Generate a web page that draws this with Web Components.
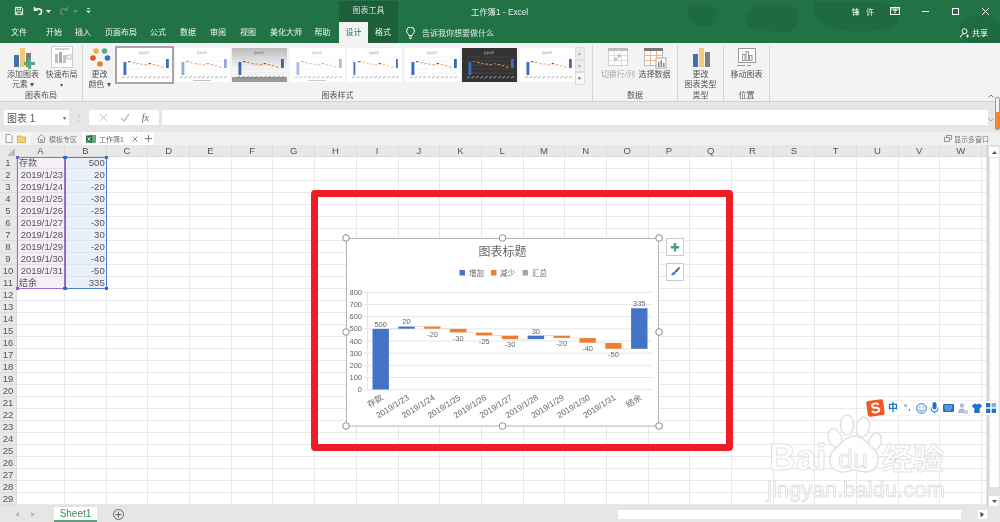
<!DOCTYPE html>
<html lang="zh-CN">
<head>
<meta charset="UTF-8">
<title>工作簿1 - Excel</title>
<style>
  html, body { margin: 0; height: 100%; overflow: hidden; background: #fff; }
  body { font-family: "Liberation Sans", "Noto Sans CJK SC", sans-serif; color: #444; }
  #page { position: relative; width: 1000px; height: 522px; overflow: hidden; display: flex; flex-direction: column; filter: blur(.35px); }
</style>
</head>
<body>
<div id="page">
  <xl-header></xl-header>
  <xl-ribbon></xl-ribbon>
  <xl-formula></xl-formula>
  <xl-books></xl-books>
  <xl-sheet></xl-sheet>
  <xl-sheettabs></xl-sheettabs>
  <xl-watermark></xl-watermark>
  <xl-chart></xl-chart>
  <xl-redframe></xl-redframe>
  <xl-ime></xl-ime>
  <xl-sidegrip></xl-sidegrip>
</div>

<script>
  // small helper, every element is just a shadow root with fixed markup
  const define = (name, html) => {
    customElements.define(name, class extends HTMLElement {
      constructor() {
        super()
        this.attachShadow({ mode: 'open' })
        this.shadowRoot.innerHTML = typeof html === 'function' ? html(this) : html
      }
    })
  }

  define('xl-thumb', (el) => {
    const v = el.getAttribute('v')
    const themes = {
      1: { bg: '#fff', bar: '#3f6cc0', tick: '#f3a878', grid: '#f0f0f0', txt: '#999' },
      2: { bg: '#fff', bar: '#8faadc', tick: '#f5b48c', grid: '#f2f2f2', txt: '#999', foot: 1 },
      3: { bg: 'url(#g3)', bar: '#3a63b0', tick: '#ed8b4c', grid: '#ddd', txt: '#666', band: 1 },
      4: { bg: '#fff', bar: '#a9bce6', tick: '#f8c9a8', grid: '#f6f6f6', txt: '#aaa', foot: 1 },
      5: { bg: '#fff', bar: '#3f6cc0', tick: '#f9c6a2', grid: '#f4f4f4', txt: '#999', thin: 1 },
      6: { bg: '#fff', bar: '#3566c8', tick: '#f3a878', grid: '#eee', txt: '#999', vert: 1 },
      7: { bg: '#333', bar: '#3f6cc0', tick: '#d9803f', grid: '#555', txt: '#bbb' },
      8: { bg: '#fff', bar: '#3f6cc0', tick: '#f3b08a', grid: '#f2f2f2', txt: '#999', vert: 1 }
    }
    const t = themes[v]
    let s = `<rect width="55" height="34" fill="${t.bg}"/>`
    if (t.band) s += '<rect y="29" width="55" height="5" fill="#9a9a9a"/>'
    for (let i = 0; i < 5; i++) s += `<line x1="5" x2="52" y1="${9 + i * 4}" y2="${9 + i * 4}" stroke="${t.grid}" stroke-width=".5"/>`
    if (t.vert) for (let i = 0; i < 11; i++) s += `<line x1="${6 + i * 4.4}" x2="${6 + i * 4.4}" y1="9" y2="27" stroke="${t.grid}" stroke-width=".4"/>`
    s += `<text x="27" y="5.5" font-size="2.6" text-anchor="middle" fill="${t.txt}">图表标题</text>`
    const w = t.thin ? 1.8 : 2.8
    s += `<rect x="${6.5}" y="14" width="${w}" height="13" fill="${t.bar}"/>`
    const ys = [13, 14, 15, 15.5, 16, 15, 16, 17, 18.5]
    ys.forEach((y, i) => {
      s += `<rect x="${11 + i * 4.1}" y="${y}" width="2.6" height="1.2" fill="${i === 0 || i === 5 ? t.bar : t.tick}"/>`
    })
    s += `<rect x="${49}" y="11" width="${w}" height="9" fill="${t.bar}"/>`
    for (let i = 0; i < 11; i++) s += `<line x1="${5 + i * 4.4}" y1="30" x2="${8 + i * 4.4}" y2="28.4" stroke="${t.txt}" stroke-width=".8"/>`
    if (t.foot) s += `<line x1="18" x2="36" y1="32.5" y2="32.5" stroke="${t.txt}" stroke-width=".6"/>`
    return `<style>
      :host { display: block; width: 55px; height: 34px; flex: none; }
      svg { display: block; }
    </style>
    <svg width="55" height="34" viewBox="0 0 55 34"><defs><linearGradient id="g3" x1="0" y1="0" x2="0" y2="1"><stop offset="0" stop-color="#bbb"/><stop offset=".6" stop-color="#f5f5f5"/></linearGradient></defs>${s}</svg>`
  })

  define('xl-header', `<style>
    :host { display: block; height: 43px; background: #217346; position: relative; color: #fff; font-size: 8px; flex: none; overflow: hidden; }
    .blobs { position: absolute; left: 0; top: 0; }
    .top { position: relative; display: flex; height: 22px; align-items: center; }
    .quick { width: 339px; display: flex; align-items: center; padding-left: 14px; box-sizing: border-box; gap: 6px; align-self: stretch; flex: none; }
    .tool { width: 59px; align-self: stretch; margin-top: 1px; background: #1d5f3a; text-align: center; line-height: 20px; color: #cfe0d6; flex: none; }
    .title { margin-left: 73px; color: #e8f1ec; font-size: 8.300px; white-space: nowrap; }
    .win { margin-left: auto; display: flex; align-items: center; }
    .user { margin-right: 4px; letter-spacing: 2px; }
    .win svg { display: block; }
    .box { width: 30px; display: flex; justify-content: center; }
    .tabs { position: relative; display: flex; height: 21px; align-items: center; }
    .t { text-align: center; line-height: 21px; height: 21px; color: #eef5f1; flex: none; }
    .on { background: #f3f3f3; color: #217346; }
    .fmt { background: #1d5f3a; }
    .tell { margin-left: 8px; display: flex; align-items: center; gap: 7px; color: #dfeae4; }
    .share { margin-left: auto; margin-right: 12px; display: flex; align-items: center; gap: 2px; }
  </style>
  <svg class="blobs" width="1000" height="43" fill="#1f6a40">
    <path d="M688 8q10-6 24-2q8 6 4 16q-10 6-20 4q-10-6-8-18z"/>
    <path d="M745 14q14-12 30-10q20-2 24 10q2 12-10 18q-16 2-26-4q-18 4-18-14z"/>
    <path d="M815 2h55q20 0 25 6q10 10-4 20q-30 6-50 2q-30-4-26-28z"/>
    <path d="M960 24q8-10 24-8q16 2 16 14v13h-32q-12-8-8-19z"/>
  </svg>
  <div class="top">
    <div class="quick">
      <svg width="10" height="10" viewBox="0 0 11 11" fill="none" stroke="#fff"><path d="M1.500 1.500h6.500l1.500 1.500v6.500h-8z"/><path d="M3.500 1.500v2.500h3.500v-2.500M3 9.500v-3h5v3"/></svg>
      <svg style="margin-left:3px" width="10" height="10" viewBox="0 0 10 10" fill="none" stroke="#fff" stroke-width="1.400"><path d="M1.500 1v3.200h3.200M1.600 4.200c2-2.400 6.800-2 7 1.200c0 1.800-1.200 3-3 3.200"/></svg>
      <svg width="5" height="3" viewBox="0 0 5 3" fill="#fff" style="margin-left:-3px"><path d="M0 0h5l-2.500 3z"/></svg>
      <svg style="margin-left:2px" width="10" height="10" viewBox="0 0 10 10" fill="none" stroke="#5b9476" stroke-width="1.200"><path d="M8.500 1v3.200h-3.200M8.400 4.200c-2-2.400-6.800-2-7 1.200c0 1.800 1.200 3 3 3.200"/></svg>
      <svg width="5" height="3" viewBox="0 0 5 3" fill="#5b9476" style="margin-left:-2px"><path d="M0 0h5l-2.500 3z"/></svg>
      <svg style="margin-left:2px" width="5" height="6" viewBox="0 0 5 6" fill="#c8dcd0"><path d="M1 0h3v1h-3zM0 2.500h5l-2.500 3z"/></svg>
    </div>
    <div class="tool">图表工具</div>
    <div class="title">工作簿1 - Excel</div>
    <div class="win">
      <span class="user">锋 许</span>
      <div class="box"><svg width="10" height="8" viewBox="0 0 10 8" fill="none" stroke="#fff"><rect x=".5" y=".5" width="9" height="7"/><path d="M5 6.500v-4M3.200 4l1.800-1.800l1.800 1.800"/><path d="M.5 2h9"/></svg></div>
      <div class="box"><svg width="9" height="9" viewBox="0 0 9 9" stroke="#fff"><path d="M1 4.500h7"/></svg></div>
      <div class="box"><svg width="9" height="9" viewBox="0 0 9 9" fill="none" stroke="#fff"><rect x="1.500" y="1.500" width="6" height="6"/></svg></div>
      <div class="box"><svg width="9" height="9" viewBox="0 0 9 9" stroke="#fff"><path d="M1 1l7 7M8 1l-7 7"/></svg></div>
    </div>
  </div>
  <div class="tabs">
    <div class="t" style="width:38px">文件</div>
    <div class="t" style="width:32px">开始</div>
    <div class="t" style="width:26px">插入</div>
    <div class="t" style="width:50px">页面布局</div>
    <div class="t" style="width:24px">公式</div>
    <div class="t" style="width:36px">数据</div>
    <div class="t" style="width:24px">审阅</div>
    <div class="t" style="width:36px">视图</div>
    <div class="t" style="width:40px">美化大师</div>
    <div class="t" style="width:33px">帮助</div>
    <div class="t on" style="width:29px">设计</div>
    <div class="t fmt" style="width:30px">格式</div>
    <div class="tell">
      <svg width="9" height="12" viewBox="0 0 9 12" fill="none" stroke="#fff"><path d="M2.800 8.500c0-1.600-2.200-2.400-2.200-4.600a3.900 3.900 0 0 1 7.800 0c0 2.200-2.200 3-2.200 4.600zM3 10h3M3.600 11.500h1.800"/></svg>
      <span>告诉我你想要做什么</span>
    </div>
    <div class="share">
      <svg width="10" height="10" viewBox="0 0 10 10" fill="none" stroke="#fff"><circle cx="4.500" cy="3.200" r="2.500"/><path d="M.5 9.500c0-2.400 2-3.800 4-3.800M7.500 6.500v3M6 8h3"/></svg>
      <span>共享</span>
    </div>
  </div>`)

  define('xl-ribbon', `<style>
    :host { display: flex; height: 59px; background: #f3f3f3; flex: none; font-size: 8px; color: #555; box-sizing: border-box; border-bottom: 1px solid #d2d2d2; }
    .g { display: flex; flex-direction: column; box-sizing: border-box; border-right: 1px solid #d6d6d6; margin: 2px 0 0; flex: none; }
    .c { display: flex; flex: 1; min-height: 0; }
    .l { height: 10px; line-height: 9px; text-align: center; color: #555; font-size: 8px; }
    .b { display: flex; flex-direction: column; align-items: center; flex: none; text-align: center; line-height: 10px; }
    .b svg { display: block; height: 23px; margin-bottom: 1px; margin-top: 1px; }
    .off { color: #aaa; }
    .gal { display: flex; gap: 2.500px; padding-top: 3px; padding-left: 1px; }
    .sel { outline: 2px solid #a6a6a6; outline-offset: 0; }
    .more { width: 10px; margin-top: 2px; display: flex; flex-direction: column; height: 38px; flex: none; }
    .more div { flex: 1; background: #ececec; border: 1px solid #dcdcdc; display: flex; align-items: center; justify-content: center; color: #aaa; font-size: 5px; line-height: 1; }
    .more div:last-child { background: #f8f8f8; color: #666; }
  </style>
  <div class="g" style="width:83px">
    <div class="c" style="padding-left:5px">
      <div class="b" style="width:36px">
        <svg width="24" height="23" viewBox="0 0 24 23"><rect x="3" y="9" width="5" height="12" fill="#4472a8"/><rect x="9" y="2" width="5" height="19" fill="#f1c97a"/><rect x="15" y="7" width="5" height="14" fill="#7f7f7f"/><path d="M17 12h3v4h4v3h-4v4h-3v-4h-4v-3h4z" fill="#5aa687"/></svg>
        <span>添加图表<br>元素 ▾</span>
      </div>
      <div class="b" style="width:41px">
        <svg width="24" height="23" viewBox="0 0 24 23"><rect x="1.500" y=".5" width="21" height="21" fill="#fff" stroke="#cfcfcf"/><path d="M5 3h14" stroke="#aaa"/><rect x="5" y="8" width="3" height="9" fill="#bcbcbc"/><rect x="9" y="6" width="3" height="11" fill="#aaa"/><rect x="13" y="9" width="3" height="8" fill="#c4c4c4"/><rect x="17" y="9" width="4" height="4" fill="none" stroke="#bbb"/></svg>
        <span>快速布局<br><span style="font-size:6px">▾</span></span>
      </div>
    </div>
    <div class="l">图表布局</div>
  </div>
  <div class="g" style="width:510px">
    <div class="c">
      <div class="b" style="width:33px;flex:none">
        <svg width="24" height="23" viewBox="0 0 24 23"><circle cx="8" cy="5" r="2.800" fill="#f0b040"/><circle cx="16.500" cy="5" r="2.800" fill="#5fa88f"/><circle cx="5" cy="12" r="2.800" fill="#e0552a"/><circle cx="19.500" cy="12" r="2.800" fill="#2f75c0"/><circle cx="12" cy="18" r="2.800" fill="#ee7d22"/></svg>
        <span>更改<br>颜色 ▾</span>
      </div>
      <div class="gal">
        <xl-thumb v="1" class="sel"></xl-thumb>
        <xl-thumb v="2"></xl-thumb>
        <xl-thumb v="3"></xl-thumb>
        <xl-thumb v="4"></xl-thumb>
        <xl-thumb v="5"></xl-thumb>
        <xl-thumb v="6"></xl-thumb>
        <xl-thumb v="7"></xl-thumb>
        <xl-thumb v="8"></xl-thumb>
      </div>
      <div class="more"><div>▲</div><div>▼</div><div>▼</div></div>
    </div>
    <div class="l">图表样式</div>
  </div>
  <div class="g" style="width:85px">
    <div class="c" style="padding-left:7px">
      <div class="b off" style="width:36px">
        <svg width="22" height="23" viewBox="0 0 22 23"><rect x="1.500" y="2.500" width="19" height="17" fill="#fff" stroke="#ccc"/><rect x="1" y="2" width="20" height="3" fill="#bbb"/><path d="M1.500 9.500h19M1.500 14.500h19M7.500 5v14M14.500 5v14" stroke="#ddd"/><path d="M8 14l5-5M13 9h-2.500M13 9v2.500M8 14h2.500M8 14v-2.500" stroke="#a8a8a8" fill="none"/></svg>
        <span style="white-space:nowrap">切换行/列</span>
      </div>
      <div class="b" style="width:37px">
        <svg width="24" height="23" viewBox="0 0 24 23"><rect x="1.500" y="2.500" width="18" height="17" fill="#fff" stroke="#bbb"/><rect x="1" y="2" width="19" height="3" fill="#777"/><path d="M1.500 9.500h18M1.500 14.500h18M7.500 5v14M13.500 5v14" stroke="#f2b48a"/><rect x="13" y="12" width="10" height="10" fill="#fff" stroke="#aaa"/><rect x="15" y="16" width="1.500" height="5" fill="#888"/><rect x="17.500" y="14" width="1.500" height="7" fill="#888"/><rect x="20" y="17" width="1.500" height="4" fill="#888"/></svg>
        <span style="white-space:nowrap">选择数据</span>
      </div>
    </div>
    <div class="l">数据</div>
  </div>
  <div class="g" style="width:46px">
    <div class="c">
      <div class="b" style="width:45px">
        <svg width="20" height="23" viewBox="0 0 20 23"><rect x="2" y="8" width="5" height="13" fill="#4472a8"/><rect x="8" y="2" width="5" height="19" fill="#f1c97a"/><rect x="14" y="6" width="5" height="15" fill="#7f7f7f"/></svg>
        <span>更改<br><span style="white-space:nowrap">图表类型</span></span>
      </div>
    </div>
    <div class="l">类型</div>
  </div>
  <div class="g" style="width:46px">
    <div class="c">
      <div class="b" style="width:45px">
        <svg width="22" height="23" viewBox="0 0 22 23" fill="none" stroke="#999"><rect x="2.500" y="2.500" width="17" height="14" fill="#fff"/><rect x="6.500" y="8.500" width="2.500" height="6"/><rect x="10" y="5.500" width="2.500" height="9"/><rect x="13.500" y="9.500" width="2.500" height="5"/><path d="M1 19.500h8M11 19.500h4"/></svg>
        <span style="white-space:nowrap">移动图表</span>
      </div>
    </div>
    <div class="l">位置</div>
  </div>`)

  define('xl-formula', `<style>
    :host { display: flex; height: 30px; background: #e6e6e6; flex: none; padding: 8px 0 7px 4px; box-sizing: border-box; align-items: stretch; color: #555; }
    .w { background: #fff; display: flex; align-items: center; box-sizing: border-box; flex: none; }
    .name { width: 65px; padding: 0 3px; font-size: 10px; justify-content: space-between; }
    .name i { font-style: normal; font-size: 6px; color: #666; }
    .dots { width: 20px; text-align: center; color: #aaa; font-size: 8px; line-height: 15px; flex: none; }
    .btns { width: 70px; justify-content: space-around; padding: 0 4px; }
    .fx { font-family: "Liberation Serif", serif; font-style: italic; font-size: 10px; color: #666; }
    .in { margin-left: 3px; width: 826px; }
  </style>
  <div class="w name"><span>图表 1</span><i>▾</i></div>
  <div class="dots">⋮</div>
  <div class="w btns">
    <svg width="9" height="9" viewBox="0 0 9 9" stroke="#bbb" fill="none"><path d="M1 1l7 7M8 1l-7 7"/></svg>
    <svg width="10" height="9" viewBox="0 0 10 9" stroke="#bbb" fill="none" stroke-width="1.300"><path d="M1 5l3 3l5-7"/></svg>
    <span class="fx">fx</span>
  </div>
  <div class="w in"></div>`)

  define('xl-books', `<style>
    :host { display: flex; height: 13px; background: #f0f0f0; flex: none; font-size: 7px; color: #777; align-items: stretch; }
    .i { display: flex; align-items: center; gap: 3px; flex: none; box-sizing: border-box; }
    .right { margin-left: auto; margin-right: 11px; gap: 2px; }
  </style>
  <div class="i" style="width:31px;background:#f6f6f6;padding-left:5px;gap:4px">
    <svg width="8" height="9" viewBox="0 0 8 9" fill="#fff" stroke="#999"><path d="M1 .5h4l2 2v6h-6z"/></svg>
    <svg width="9" height="8" viewBox="0 0 9 8" fill="#f4d27a" stroke="#d9b050"><path d="M.5 1h3l1 1h4v5.500h-8z"/></svg>
  </div>
  <div class="i" style="width:50px;padding-left:6px">
    <svg width="9" height="9" viewBox="0 0 9 9" fill="none" stroke="#999"><path d="M.5 4.500l4-4l4 4M1.500 4v4.500h6v-4.500M3.500 8.500v-3h2v3"/></svg>
    <span>模板专区</span>
  </div>
  <div class="i" style="width:59px;background:#fff;padding-left:4px;margin-left:1px">
    <svg width="10" height="10" viewBox="0 0 10 10"><rect x="3" y="1" width="7" height="8" fill="#6aa886"/><rect y="1.500" width="6" height="7" fill="#1d6b3f"/><path d="M1.500 3l3 4M4.500 3l-3 4" stroke="#fff" stroke-width=".8"/></svg>
    <span style="color:#666">工作簿1</span>
    <svg style="margin-left:auto;margin-right:3px" width="6" height="6" viewBox="0 0 6 6" stroke="#888"><path d="M.5.500l5 5M5.500.500l-5 5"/></svg>
  </div>
  <div class="i" style="width:12px;background:#fff;margin-left:1px;justify-content:center">
    <svg width="7" height="7" viewBox="0 0 7 7" stroke="#777"><path d="M3.500 0v7M0 3.500h7"/></svg>
  </div>
  <div class="i right">
    <svg width="8" height="7" viewBox="0 0 8 7" fill="none" stroke="#999"><rect x="2.500" y=".5" width="5" height="4"/><rect x=".5" y="2.500" width="5" height="4" fill="#f0f0f0"/></svg>
    <span>显示多窗口</span>
  </div>`)

  define('xl-sheet', () => {
    const cols = ['A','B','C','D','E','F','G','H','I','J','K','L','M','N','O','P','Q','R','S','T','U','V','W','']
    const dates = ['存款','2019/1/23','2019/1/24','2019/1/25','2019/1/26','2019/1/27','2019/1/28','2019/1/29','2019/1/30','2019/1/31','结余']
    const vals = [500,20,-20,-30,-25,-30,30,-20,-40,-50,335]
    let cells = '<div class="corner"><svg width="9" height="9" viewBox="0 0 9 9"><path d="M9 1v8h-8z" fill="#bdbdbd"/></svg></div>'
    cols.forEach((c) => { cells += `<div class="h">${c}</div>` })
    for (let r = 0; r < 29; r++) {
      cells += `<div class="h rh">${r + 1}</div>`
      cols.forEach((c, i) => {
        let txt = ''
        let cls = 'd'
        if (r < 11 && i === 0) {
          txt = dates[r]
          cls += r === 0 || r === 10 ? ' sa txt' : ' sa date'
        }
        if (r < 11 && i === 1) {
          txt = vals[r]
          cls += ' sb num'
        }
        cells += `<div class="${cls}">${txt}</div>`
      })
    }
    return `<style>
      :host { display: flex; height: 362px; flex: none; background: #e4e4e4; }
      .stack { display: grid; width: 987px; height: 360px; flex: none; }
      .grid, .ov { grid-area: 1 / 1; display: grid; grid-template-columns: 17px 48px repeat(22, 41.7px) 1fr; grid-auto-rows: 12px; }
      .grid { background: #fff; font-size: 9.500px; }
      .ov { pointer-events: none; }
      .d { box-sizing: border-box; border-right: 1px solid #e9e9e9; border-bottom: 1px solid #e9e9e9; line-height: 12px; white-space: nowrap; overflow: hidden; color: #555; }
      .h { box-sizing: border-box; background: #e8e8e8; border-right: 1px solid #dcdcdc; border-bottom: 1px solid #dcdcdc; text-align: center; line-height: 12px; font-size: 9.500px; color: #555; }
      .corner { background: #e8e8e8; display: flex; align-items: center; justify-content: flex-end; padding-right: 2px; }
      .sa { background: #f4eff8; text-align: right; padding-right: 1px; border-color: #e2dfe6; }
      .txt { text-align: left; padding-left: 2px; font-size: 9px; }
      .sb { background: #e9f0fa; text-align: right; padding-right: 1px; border-color: #dde3ee; }
      .rng { box-sizing: border-box; position: relative; }
      .ra { grid-area: 2 / 2 / 13 / 3; border: 1px solid #9b6fc8; }
      .rb { grid-area: 2 / 3 / 13 / 4; border: 1px solid #4d7fd6; }
      .rng i { position: absolute; width: 3px; height: 3px; }
      .ra i { background: #8a5cbc; } .rb i { background: #3569c8; }
      .tl { left: -2px; top: -2px; } .tr { right: -2px; top: -2px; } .bl { left: -2px; bottom: -2px; } .br { right: -2px; bottom: -2px; }
      .bar { width: 13px; display: flex; flex-direction: column; align-items: center; background: #e2e2e2; border-left: 1px solid #d0d0d0; box-sizing: border-box; flex: none; }
      .sb-btn { width: 10px; height: 10px; background: #fff; display: flex; align-items: center; justify-content: center; flex: none; }
      .thumb { width: 9px; height: 329px; background: #fff; margin-top: 1px; flex: none; }
    </style>
    <div class="stack">
      <div class="grid">${cells}</div>
      <div class="ov">
        <div class="rng ra"><i class="tl"></i><i class="tr"></i><i class="bl"></i><i class="br"></i></div>
        <div class="rng rb"><i class="tl"></i><i class="tr"></i><i class="bl"></i><i class="br"></i></div>
      </div>
    </div>
    <div class="bar">
      <div class="sb-btn" style="margin-top:2px"><svg width="5" height="3" viewBox="0 0 5 3" fill="#555"><path d="M2.500 0l2.500 3h-5z"/></svg></div>
      <div class="thumb"></div>
      <div class="sb-btn" style="margin-top:auto;margin-bottom:1px"><svg width="5" height="3" viewBox="0 0 5 3" fill="#555"><path d="M0 0h5l-2.500 3z"/></svg></div>
    </div>`
  })

  define('xl-sheettabs', `<style>
    :host { display: flex; height: 15px; flex: none; background: #e6e6e6; align-items: stretch; font-size: 10px; }
    .nav { width: 54px; display: flex; align-items: center; padding-left: 15px; gap: 12px; box-sizing: border-box; flex: none; }
    .tab { width: 43px; background: #fff; color: #3f8a68; text-align: center; line-height: 13px; height: 15px; box-sizing: border-box; border-bottom: 2px solid #5f9e80; flex: none; }
    .add { margin-left: 16px; display: flex; align-items: center; flex: none; }
    .hs { margin-left: 494px; display: flex; align-items: center; flex: none; }
    .field { width: 343px; height: 9px; background: #fff; }
    .r { margin-left: 17px; width: 9px; height: 9px; background: #fff; display: flex; align-items: center; justify-content: center; }
  </style>
  <div class="nav">
    <svg width="4" height="5" viewBox="0 0 4 5" fill="#bbb"><path d="M4 0v5l-4-2.500z"/></svg>
    <svg width="4" height="5" viewBox="0 0 4 5" fill="#bbb"><path d="M0 0v5l4-2.500z"/></svg>
  </div>
  <div class="tab">Sheet1</div>
  <div class="add"><svg width="11" height="11" viewBox="0 0 11 11" fill="none" stroke="#666"><circle cx="5.500" cy="5.500" r="5"/><path d="M5.500 2.500v6M2.500 5.500h6"/></svg></div>
  <div class="hs"><div class="field"></div><div class="r"><svg width="5" height="5" viewBox="0 0 5 5" fill="#555"><path d="M1 0v5l3-2.500zM0 0h.6v5h-.6z"/></svg></div></div>`)

  define('xl-watermark', `<style>
    :host { position: absolute; left: 766px; top: 412px; width: 190px; height: 92px; pointer-events: none; }
    svg { display: block; overflow: visible; }
    text { fill: rgba(255,255,255,.8); stroke: #e2e2e2; stroke-width: 1; font-family: "Liberation Sans", "Noto Sans CJK SC", sans-serif; }
    .paw { fill: rgba(255,255,255,.8); stroke: #e2e2e2; stroke-width: 1.500; }
  </style>
  <svg width="190" height="92" viewBox="766 412 190 92">
    <ellipse class="paw" cx="835" cy="438" rx="6.500" ry="9.500" transform="rotate(-20 835 438)"/>
    <ellipse class="paw" cx="847" cy="425" rx="6.500" ry="10"/>
    <ellipse class="paw" cx="863" cy="427" rx="6.500" ry="10" transform="rotate(10 863 427)"/>
    <ellipse class="paw" cx="875" cy="442" rx="6" ry="9" transform="rotate(20 875 442)"/>
    <path class="paw" d="M855 436c8 0 13 8 19 13c7 7 6 22-8 23c-5 0-8-2-12-2c-4 0-8 3-13 2c-14-2-13-16-7-22c6-6 12-14 21-14z"/>
    <text x="769" y="470" font-size="37" font-weight="bold">Bai</text>
    <text x="838" y="468" style="font-size:25px" lengthAdjust="spacingAndGlyphs" textLength="30">du</text>
    <text x="882" y="469" font-size="30" font-weight="bold" lengthAdjust="spacingAndGlyphs" textLength="62">经验</text>
    <text x="767" y="497" font-size="22" lengthAdjust="spacingAndGlyphs" textLength="178">jingyan.baidu.com</text>
  </svg>`)

  define('xl-chart', () => {
    const y = (v) => 389.7 - v * 0.1217
    const cx = (i) => 380.7 + i * 25.86
    let s = ''
    for (let i = 0; i <= 8; i++) {
      s += `<line x1="364" x2="652" y1="${y(i * 100)}" y2="${y(i * 100)}" stroke="#e6e6e6"/>`
      s += `<text x="362" y="${y(i * 100) + 2.6}" font-size="7.500" text-anchor="end" fill="#666">${i * 100}</text>`
    }
    s += `<line x1="367.500" x2="367.500" y1="${y(800)}" y2="${y(0)}" stroke="#e6e6e6"/>`
    const bars = [
      [0, 500, '500', 1], [500, 520, '20', 1], [520, 500, '-20', 0], [500, 470, '-30', 0],
      [470, 445, '-25', 0], [445, 415, '-30', 0], [415, 445, '30', 1], [445, 425, '-20', 0],
      [425, 385, '-40', 0], [385, 335, '-50', 0], [335, 670, '335', 1]
    ]
    bars.forEach(([a, b, label, up], i) => {
      const top = y(Math.max(a, b))
      const bot = y(Math.min(a, b))
      if (i < 10) s += `<line x1="${cx(i) + 8}" x2="${cx(i + 1) - 8}" y1="${y(b)}" y2="${y(b)}" stroke="#e0e0e0"/>`
      s += `<rect x="${cx(i) - 8.3}" y="${top}" width="16.600" height="${bot - top}" fill="${up ? '#4472c4' : '#ed7d31'}" stroke="#fff" stroke-opacity=".35" stroke-width=".6"/>`
      const ly = up ? top - 2 : bot + 8
      s += `<text x="${cx(i)}" y="${ly}" font-size="7.500" text-anchor="middle" fill="#666">${label}</text>`
    })
    const cats = ['存款','2019/1/23','2019/1/24','2019/1/25','2019/1/26','2019/1/27','2019/1/28','2019/1/29','2019/1/30','2019/1/31','结余']
    cats.forEach((c, i) => {
      const tx = cx(i) + 3
      s += `<text x="${tx}" y="399" font-size="8.300" text-anchor="end" fill="#666" transform="rotate(-32 ${tx} 399)">${c}</text>`
    })
    const handle = (x, yy) => `<circle cx="${x}" cy="${yy}" r="3.300" fill="#fff" stroke="#8c8c8c"/>`
    return `<style>
      :host { position: absolute; left: 0; top: 0; width: 1000px; height: 522px; pointer-events: none; }
      svg { display: block; font-family: "Liberation Sans", "Noto Sans CJK SC", sans-serif; }
    </style>
    <svg width="1000" height="522" viewBox="0 0 1000 522">
      <rect x="346.500" y="238.500" width="312" height="187.500" fill="#fff" stroke="#b4b4b4"/>
      <text x="502.500" y="256" font-size="12" text-anchor="middle" fill="#666">图表标题</text>
      <rect x="459.500" y="270" width="5.500" height="5.500" fill="#4472c4"/>
      <text x="469" y="276" font-size="7.500" fill="#666">增加</text>
      <rect x="491" y="270" width="5.500" height="5.500" fill="#ed7d31"/>
      <text x="500" y="276" font-size="7.500" fill="#666">减少</text>
      <rect x="522.500" y="270" width="5.500" height="5.500" fill="#a5a5a5"/>
      <text x="532" y="276" font-size="7.500" fill="#666">汇总</text>
      ${s}
      ${handle(346, 238)}${handle(502.5, 238)}${handle(659, 238)}
      ${handle(346, 332)}${handle(659, 332)}
      ${handle(346, 426)}${handle(502.5, 426)}${handle(659, 426)}
      <rect x="666.500" y="238.500" width="17" height="17" fill="#fff" stroke="#ccc"/>
      <path d="M673.800 243h2.400v3h3v2.400h-3v3h-2.400v-3h-3v-2.400h3z" fill="#4f9e7d"/>
      <rect x="666.500" y="263.500" width="17" height="17" fill="#fff" stroke="#ccc"/>
      <path d="M679 267l1.200 1l-4 4.500l-1.600-1.200z" fill="#555"/>
      <path d="M674.500 271.500c-1.500 0-2 1-2.300 2c-.2.700-.8 1.200-1.700 1.300c2 1 4.800.6 5.300-2z" fill="#4f81c7"/>
    </svg>`
  })

  define('xl-redframe', `<style>
    :host { position: absolute; left: 311px; top: 190px; width: 422px; height: 261px; box-sizing: border-box; border: 7px solid #ee1c25; border-radius: 4px; pointer-events: none; }
  </style>`)

  define('xl-ime', `<style>
    :host { position: absolute; left: 867px; top: 399px; width: 132px; height: 18px; display: flex; align-items: center; pointer-events: none; }
    .logo { width: 17px; height: 16px; background: #ee5a24; border-radius: 2px; transform: rotate(-8deg); color: #fff; font-weight: bold; font-size: 15px; line-height: 16px; text-align: center; flex: none; position: relative; z-index: 1; }
    .bar { margin-left: -1px; height: 14px; background: #fff; display: flex; align-items: center; width: 115px; box-shadow: 0 0 1px #bbb; color: #1f73c9; }
    .bar > * { flex: none; }
    .zh { font-size: 10px; font-weight: bold; margin-left: 5px; width: 11px; line-height: 14px; }
    .pun { font-size: 8px; margin-left: 5px; width: 10px; letter-spacing: 1px; line-height: 14px; font-weight: bold; }
  </style>
  <div class="logo">S</div>
  <div class="bar">
    <span class="zh">中</span>
    <span class="pun">°,</span>
    <svg style="margin-left:2px" width="11" height="11" viewBox="0 0 11 11" fill="none" stroke="#1f73c9"><circle cx="5.500" cy="5.500" r="4.800"/><path d="M3 6.500c1 2 4 2 5 0"/><path d="M3.800 3.500v1.200M7.200 3.500v1.200"/></svg>
    <svg style="margin-left:3px" width="9" height="12" viewBox="0 0 9 12" fill="#1f73c9"><rect x="2.500" y="0" width="4" height="7.500" rx="2"/><path d="M1 5.500v1a3.500 3.500 0 0 0 7 0v-1M4.500 10v1.500" fill="none" stroke="#1f73c9"/></svg>
    <svg style="margin-left:4px" width="11" height="8" viewBox="0 0 11 8"><rect width="11" height="8" rx="1" fill="#1f73c9"/><path d="M1.500 2h8M1.500 4h8M3 6h5" stroke="#cfe3f6" stroke-dasharray="1 .6"/></svg>
    <svg style="margin-left:4px" width="10" height="11" viewBox="0 0 10 11" fill="#a9bdd3"><circle cx="4" cy="2.500" r="2.200"/><path d="M0 10c0-3 1.500-4.500 4-4.500s3 1 3 2v2.500z"/><rect x="6" y="7" width="4" height="4" fill="#c6d3e2"/></svg>
    <svg style="margin-left:4px" width="10" height="10" viewBox="0 0 10 10" fill="#1f73c9"><path d="M3 .5l2 1l2-1l3 2l-1 2.500l-1.300-.5v5.500h-5.400v-5.500l-1.300.5l-1-2.500z"/></svg>
    <svg style="margin-left:4px" width="10" height="10" viewBox="0 0 10 10" fill="#1f73c9"><rect width="4.300" height="4.300"/><rect x="5.700" width="4.300" height="4.300" fill="#7fb0e0"/><rect y="5.700" width="4.300" height="4.300"/><rect x="5.700" y="5.700" width="4.300" height="4.300"/></svg>
  </div>`)

  // the stray ribbon chevrons and the orange grip on the right edge of the shot
  define('xl-sidegrip', `<style>
    :host { position: absolute; left: 988px; top: 94px; width: 12px; height: 36px; pointer-events: none; display: flex; }
    .ch { width: 7px; display: flex; flex-direction: column; justify-content: space-between; padding: 0 0 8px; box-sizing: border-box; }
    .grip { width: 5px; height: 33px; margin-top: 3px; box-sizing: border-box; border: 1px solid #999; border-radius: 2px; background: linear-gradient(#f3f3f3 45%, #ee8a2c 45%); }
  </style>
  <div class="ch">
    <svg width="6" height="4" viewBox="0 0 6 4" fill="none" stroke="#777"><path d="M.5 3.500l2.500-2.500l2.500 2.500"/></svg>
    <svg width="6" height="4" viewBox="0 0 6 4" fill="none" stroke="#aaa"><path d="M.5.500l2.500 2.500l2.500-2.500"/></svg>
  </div>
  <div class="grip"></div>`)
</script>
</body>
</html>
